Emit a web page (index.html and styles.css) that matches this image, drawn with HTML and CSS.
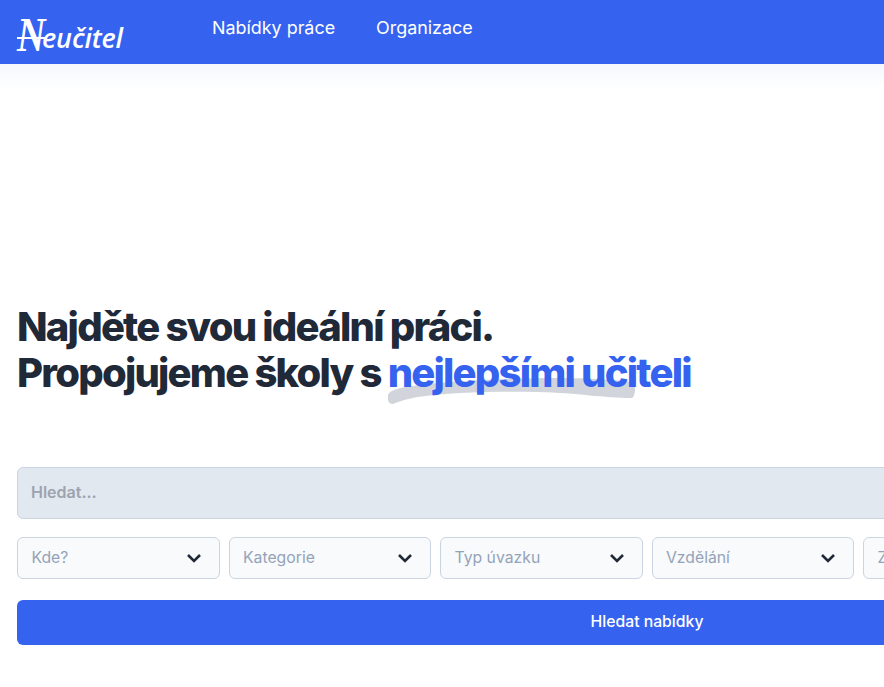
FILE: index.html
```html
<!DOCTYPE html>
<html lang="cs">
<head>
<meta charset="utf-8">
<title>Neučitel</title>
<link rel="stylesheet" href="styles.css">
</head>
<body>
<header class="topbar">
  <a class="logo" href="#"><span class="logo-n">N</span><span class="logo-rest">eučitel</span></a>
  <nav class="nav">
    <a href="#">Nabídky práce</a>
    <a href="#">Organizace</a>
  </nav>
</header>
<main class="hero">
  <h1 class="title">Najděte svou ideální práci.<br>Propojujeme školy s <span class="accent"><svg class="swoosh" viewBox="0 0 248 27" preserveAspectRatio="none" aria-hidden="true"><path d="M0 17 C2 12 10 10 24 8 C70 2 130 0 170 0 C200 0 232 2 244 4 C248 6 248 17 244 20 C215 20 190 15 150 14 C110 13 60 14 30 19 C18 21 10 24 5 26 C1 26 -1 23 0 17 Z"/></svg><span class="accent-text">nejlepšími učiteli</span></span></h1>
  <form class="search">
    <div class="query">Hledat...</div>
    <div class="filters">
      <div class="select"><span>Kde?</span><svg viewBox="0 0 16 10"><path d="M2 2l6 6 6-6"/></svg></div>
      <div class="select"><span>Kategorie</span><svg viewBox="0 0 16 10"><path d="M2 2l6 6 6-6"/></svg></div>
      <div class="select"><span>Typ úvazku</span><svg viewBox="0 0 16 10"><path d="M2 2l6 6 6-6"/></svg></div>
      <div class="select"><span>Vzdělání</span><svg viewBox="0 0 16 10"><path d="M2 2l6 6 6-6"/></svg></div>
      <div class="select"><span>Zkušenosti</span><svg viewBox="0 0 16 10"><path d="M2 2l6 6 6-6"/></svg></div>
      <div class="select"><span>Plat</span><svg viewBox="0 0 16 10"><path d="M2 2l6 6 6-6"/></svg></div>
    </div>
    <button class="submit" type="button">Hledat nabídky</button>
  </form>
</main>
</body>
</html>
```

FILE: styles.css
```css
html, body {
  margin: 0;
  padding: 0;
  height: 687px;
  overflow: hidden;
  background: #fff;
  font-family: Inter, "Liberation Sans", sans-serif;
}
.topbar {
  height: 64px;
  background: #3563f0;
  display: flex;
  align-items: center;
  padding-left: 17px;
  width: 867px;
}
.logo {
  width: 195px;
  display: flex;
  align-items: baseline;
  color: #fff;
  text-decoration: none;
  font-style: italic;
  line-height: 1;
}
.logo-n {
  position: relative;
  font-family: "Liberation Serif", serif;
  font-size: 48px;
  font-weight: 700;
  width: 25px;
  transform: translateY(3px) scaleX(0.82);
  transform-origin: left bottom;
}
.logo-n::after {
  content: "";
  position: absolute;
  left: 0;
  width: 35px;
  top: 26px;
  height: 2px;
  background: #fff;
}
.logo-rest {
  font-family: "Open Sans", sans-serif;
  font-size: 27px;
  font-weight: 600;
  letter-spacing: -0.15px;
}
.nav {
  display: flex;
  gap: 41px;
}
.nav a {
  color: #fff;
  text-decoration: none;
  font-size: 17.9px;
  line-height: 28px;
  margin-top: -8px;
}
.hero {
  padding: 240px 0 0 17px;
  width: 1260px;
  background: linear-gradient(#f5f7fe, #fff 26px);
}
.title {
  margin: 0;
  color: #1f2937;
  font-size: 40px;
  line-height: 46px;
  font-weight: 800;
  letter-spacing: -1.78px;
}
.accent {
  position: relative;
  display: inline-block;
  color: #3563f0;
}
.accent-text {
  position: relative;
}
.swoosh {
  position: absolute;
  left: 0;
  top: 28px;
  width: 248px;
  height: 27px;
}
.swoosh path {
  fill: #d1d5db;
}
.search {
  margin-top: 71px;
  display: flex;
  flex-direction: column;
}
.query {
  box-sizing: border-box;
  height: 52px;
  padding: 0 13px 2px;
  display: flex;
  align-items: center;
  background: #e2e8f0;
  border: 1px solid #cbd5e1;
  border-radius: 6px;
  color: #9ca3af;
  font-size: 16px;
  font-weight: 600;
}
.filters {
  margin-top: 18px;
  display: grid;
  grid-template-columns: repeat(6, 1fr);
  gap: 9px;
}
.select {
  box-sizing: border-box;
  height: 42px;
  padding: 0 17px 0 13.5px;
  display: flex;
  align-items: center;
  justify-content: space-between;
  background: #f8fafc;
  border: 1px solid #cbd5e1;
  border-radius: 6px;
  color: #94a3b8;
  font-size: 15.75px;
}
.select span {
  margin-top: -2px;
}
.select svg {
  width: 16px;
  height: 10px;
}
.select path {
  fill: none;
  stroke: #1f2937;
  stroke-width: 2.6;
}
.submit {
  margin-top: 21px;
  height: 45px;
  padding: 0 0 2px;
  border: 0;
  border-radius: 6px;
  background: #3563f0;
  color: #fff;
  font: 500 15.75px Inter, "Liberation Sans", sans-serif;
}
```
